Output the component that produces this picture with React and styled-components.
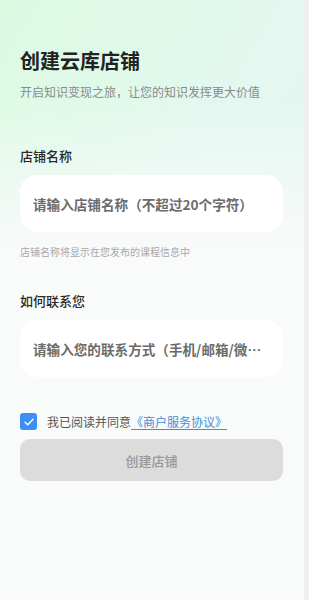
import React from "react";
import styled, { createGlobalStyle } from "styled-components";

const Global = createGlobalStyle`
  html, body { margin: 0; padding: 0; }
  body { font-family: "Noto Sans CJK SC", "Noto Sans", sans-serif; background: #f9fafa; }
  * { box-sizing: border-box; }
`;

const Frame = styled.div`
  display: flex;
  width: 309px;
  height: 600px;
  overflow: hidden;
`;

const Page = styled.div`
  flex: 1;
  min-width: 0;
  display: flex;
  flex-direction: column;
  padding: 0 21px 0 20px;
  background:
    linear-gradient(180deg, rgba(249,250,250,0) 0px, rgba(249,250,250,0) 100px, #f9fafa 250px),
    linear-gradient(120deg, #dcfbe2 0%, #e3f8f0 45%, #e4f6f6 100%);
`;

const Gutter = styled.div`
  flex: 0 0 5px;
  background: #efefef;
`;

const Title = styled.h1`
  margin: 47px 0 0;
  font-size: 20px;
  line-height: 28px;
  font-weight: 700;
  color: #222;
`;

const Subtitle = styled.p`
  margin: 9px 0 0;
  font-size: 12px;
  line-height: 16px;
  color: #8a8a8a;
`;

const Label = styled.div`
  margin-top: ${p => p.$top}px;
  font-size: 13px;
  line-height: 20px;
  font-weight: 500;
  color: #2a2a2a;
`;

const InputBox = styled.div`
  margin-top: 9px;
  height: 57px;
  border-radius: 17px;
  background: #fff;
  display: flex;
  align-items: center;
  padding: 0 20px 0 13px;
  overflow: hidden;
`;

const Placeholder = styled.span`
  min-width: 0;
  font-size: 13.6px;
  font-weight: 700;
  color: #6b6b6b;
  white-space: nowrap;
  overflow: hidden;
  text-overflow: ellipsis;
`;

const Hint = styled.div`
  margin-top: 13px;
  font-size: 10px;
  line-height: 14px;
  color: #a8a8a8;
`;

const AgreeRow = styled.div`
  margin-top: 36px;
  height: 17px;
  display: flex;
  align-items: center;
  gap: 10px;
`;

const Check = styled.div`
  width: 17px;
  height: 17px;
  border-radius: 3px;
  background: #3b8ff5;
  display: flex;
  align-items: center;
  justify-content: center;
`;

const AgreeText = styled.span`
  font-size: 12px;
  color: #555;
`;

const Link = styled.a`
  color: #3f8fdc;
  text-decoration: underline;
  text-underline-offset: 2px;
`;

const Button = styled.button`
  margin-top: 9px;
  height: 42px;
  border: none;
  border-radius: 10px;
  background: #dcdcdc;
  color: #979797;
  font-family: inherit;
  font-size: 13px;
  font-weight: 500;
`;

export default function App() {
  return (
    <>
      <Global />
      <Frame>
        <Page>
          <Title>创建云库店铺</Title>
          <Subtitle>开启知识变现之旅，让您的知识发挥更大价值</Subtitle>
          <Label $top={46}>店铺名称</Label>
          <InputBox>
            <Placeholder>请输入店铺名称（不超过20个字符）</Placeholder>
          </InputBox>
          <Hint>店铺名称将显示在您发布的课程信息中</Hint>
          <Label $top={32}>如何联系您</Label>
          <InputBox>
            <Placeholder>请输入您的联系方式（手机/邮箱/微信）</Placeholder>
          </InputBox>
          <AgreeRow>
            <Check>
              <svg width="10" height="8" viewBox="0 0 10 8" fill="none">
                <path d="M1 4.2 L3.8 6.8 L9 1.2" stroke="#fff" strokeWidth="1.4" strokeLinecap="round" strokeLinejoin="round" />
              </svg>
            </Check>
            <AgreeText>
              我已阅读并同意<Link>《商户服务协议》</Link>
            </AgreeText>
          </AgreeRow>
          <Button>创建店铺</Button>
        </Page>
        <Gutter />
      </Frame>
    </>
  );
}
